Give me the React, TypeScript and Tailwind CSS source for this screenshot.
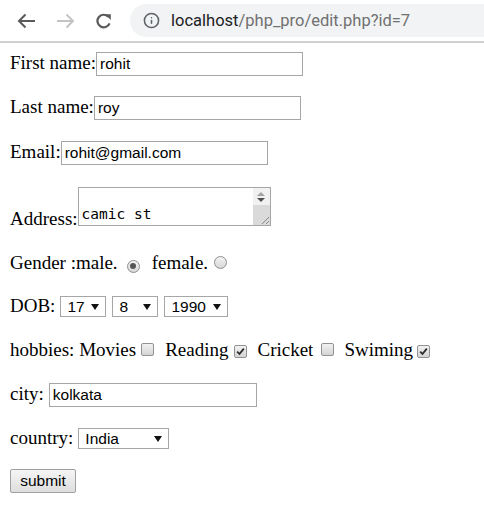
import React from 'react';
import { Info } from 'lucide-react';

function Radio({ checked }: { checked?: boolean }) {
  return (
    <span className="flex h-[13px] w-[13px] shrink-0 items-center justify-center rounded-full border border-[#8e8e8e] bg-gradient-to-b from-[#f4f4f4] to-[#d6d6d6]">
      {checked && <span className="h-[6px] w-[6px] rounded-full bg-[#555555]" />}
    </span>
  );
}

function Checkbox({ checked }: { checked?: boolean }) {
  return (
    <span className="flex h-[13px] w-[13px] shrink-0 items-center justify-center rounded-[2px] border border-[#929292] bg-gradient-to-b from-[#f2f2f2] to-[#d4d4d4]">
      {checked && (
        <svg width="9" height="9" viewBox="0 0 9 9">
          <path d="M1.2 4.6 L3.5 7 L7.8 1.6" fill="none" stroke="#2b2b2b" strokeWidth="1.8" />
        </svg>
      )}
    </span>
  );
}

function Select({ value, width }: { value: string; width: string }) {
  return (
    <span className={`flex h-[21px] ${width} shrink-0 items-center justify-between border border-[#a6a6a6] bg-white pl-[6px] pr-[6px] font-['Liberation_Sans',Arial,sans-serif] text-[15.5px] leading-[19px] text-black`}>
      <span>{value}</span>
      <svg width="8" height="6" viewBox="0 0 8 6">
        <path d="M0 0 H8 L4 6 Z" fill="#111" />
      </svg>
    </span>
  );
}

export default function App() {
  const field = "h-[24px] shrink-0 border border-[#a6a6a6] bg-white px-[3px] font-['Liberation_Sans',Arial,sans-serif] text-[15.5px] text-black outline-none";

  return (
    <div className="min-h-screen bg-white font-['Liberation_Serif','Times_New_Roman',serif] text-[19px] leading-[22px] text-black">
      {/* browser bar */}
      <div className="flex h-[43px] items-center border-b-2 border-[#d0d0d0] bg-white">
        <svg className="ml-[17px]" width="19" height="16" viewBox="0 0 19 16">
          <path d="M18 8H2 M8.5 1.5 L2 8 L8.5 14.5" fill="none" stroke="#5a5a5a" strokeWidth="2" />
        </svg>
        <svg className="ml-[20px]" width="19" height="16" viewBox="0 0 19 16">
          <path d="M1 8H17 M10.5 1.5 L17 8 L10.5 14.5" fill="none" stroke="#c4c4c4" strokeWidth="2" />
        </svg>
        <svg className="ml-[20px]" width="18" height="16" viewBox="0 0 18 16">
          <path d="M14.6 10.4 A6.3 6.3 0 1 1 13.2 3.6" fill="none" stroke="#5a5a5a" strokeWidth="2.2" />
          <path d="M10 1.2 H15.8 V7 Z" fill="#5a5a5a" />
        </svg>
        <div className="ml-[17px] flex h-[33px] flex-1 items-center rounded-l-full bg-[#f1f3f4] pl-[13px] font-['Roboto',sans-serif] text-[16.5px]">
          <Info size={17} strokeWidth={2.2} color="#5f6368" />
          <span className="ml-[11px] text-[#202124]">localhost</span>
          <span className="text-[#707070]">/php_pro/edit.php?id=7</span>
        </div>
      </div>

      <form className="flex flex-col pl-[10px]" onSubmit={(e) => e.preventDefault()}>
        <div className="mt-[9px] flex items-baseline">
          <span>First name:</span>
          <input className={`${field} w-[207px]`} defaultValue="rohit" />
        </div>

        <div className="mt-[20px] flex items-baseline">
          <span>Last name:</span>
          <input className={`${field} w-[207px]`} defaultValue="roy" />
        </div>

        <div className="mt-[21px] flex items-baseline">
          <span>Email:</span>
          <input className={`${field} w-[207px]`} defaultValue="rohit@gmail.com" />
        </div>

        {/* textarea, scrolled to its last line */}
        <div className="mt-[22px] flex items-end">
          <span className="mb-[-4px]">Address:</span>
          <div className="flex h-[39px] w-[193px] shrink-0 border border-[#a6a6a6] bg-white">
            <div className="flex flex-1 items-end pb-[2px] pl-[3px] font-['DejaVu_Sans_Mono',monospace] text-[14.5px] leading-[17px]">
              camic st
            </div>
            <div className="flex w-[17px] flex-col">
              <div className="flex h-[17px] flex-col items-center justify-center gap-[2px] bg-[#f1f1f1]">
                <svg width="8" height="4" viewBox="0 0 8 4"><path d="M0 4 L4 0 L8 4 Z" fill="#a3a3a3" /></svg>
                <svg width="8" height="4" viewBox="0 0 8 4"><path d="M0 0 H8 L4 4 Z" fill="#505050" /></svg>
              </div>
              <div className="flex flex-1 items-end justify-end bg-[#dadada]">
                <svg width="10" height="10" viewBox="0 0 10 10">
                  <path d="M9 2 L2 9 M9 6 L6 9" stroke="#8a8a8a" strokeWidth="1" />
                </svg>
              </div>
            </div>
          </div>
        </div>

        <div className="mt-[26px] flex items-baseline">
          <span>Gender :male.</span>
          <span className="ml-[9px]"><Radio checked /></span>
          <span className="ml-[12px]">female.</span>
          <span className="ml-[6px]"><Radio /></span>
        </div>

        <div className="mt-[21px] flex items-baseline">
          <span>DOB:</span>
          <span className="ml-[5px]"><Select value="17" width="w-[46px]" /></span>
          <span className="ml-[6px]"><Select value="8" width="w-[46px]" /></span>
          <span className="ml-[6px]"><Select value="1990" width="w-[64px]" /></span>
        </div>

        <div className="mt-[22px] flex items-baseline">
          <span>hobbies: Movies</span>
          <span className="ml-[5px]"><Checkbox /></span>
          <span className="ml-[11px]">Reading</span>
          <span className="ml-[6px]"><Checkbox checked /></span>
          <span className="ml-[10px]">Cricket</span>
          <span className="ml-[8px]"><Checkbox /></span>
          <span className="ml-[10px]">Swiming</span>
          <span className="ml-[4px]"><Checkbox checked /></span>
        </div>

        <div className="mt-[22px] flex items-baseline">
          <span>city:</span>
          <input className={`${field} ml-[5px] w-[208px]`} defaultValue="kolkata" />
        </div>

        <div className="mt-[20px] flex items-baseline">
          <span>country:</span>
          <span className="ml-[5px]"><Select value="India" width="w-[91px]" /></span>
        </div>

        <div className="mt-[20px] flex">
          <button
            type="submit"
            className="h-[24px] w-[66px] rounded-[2px] border border-[#a0a0a0] bg-gradient-to-b from-[#f5f5f5] to-[#dedede] font-['Liberation_Sans',Arial,sans-serif] text-[15.5px] text-black"
          >
            submit
          </button>
        </div>
      </form>
    </div>
  );
}
